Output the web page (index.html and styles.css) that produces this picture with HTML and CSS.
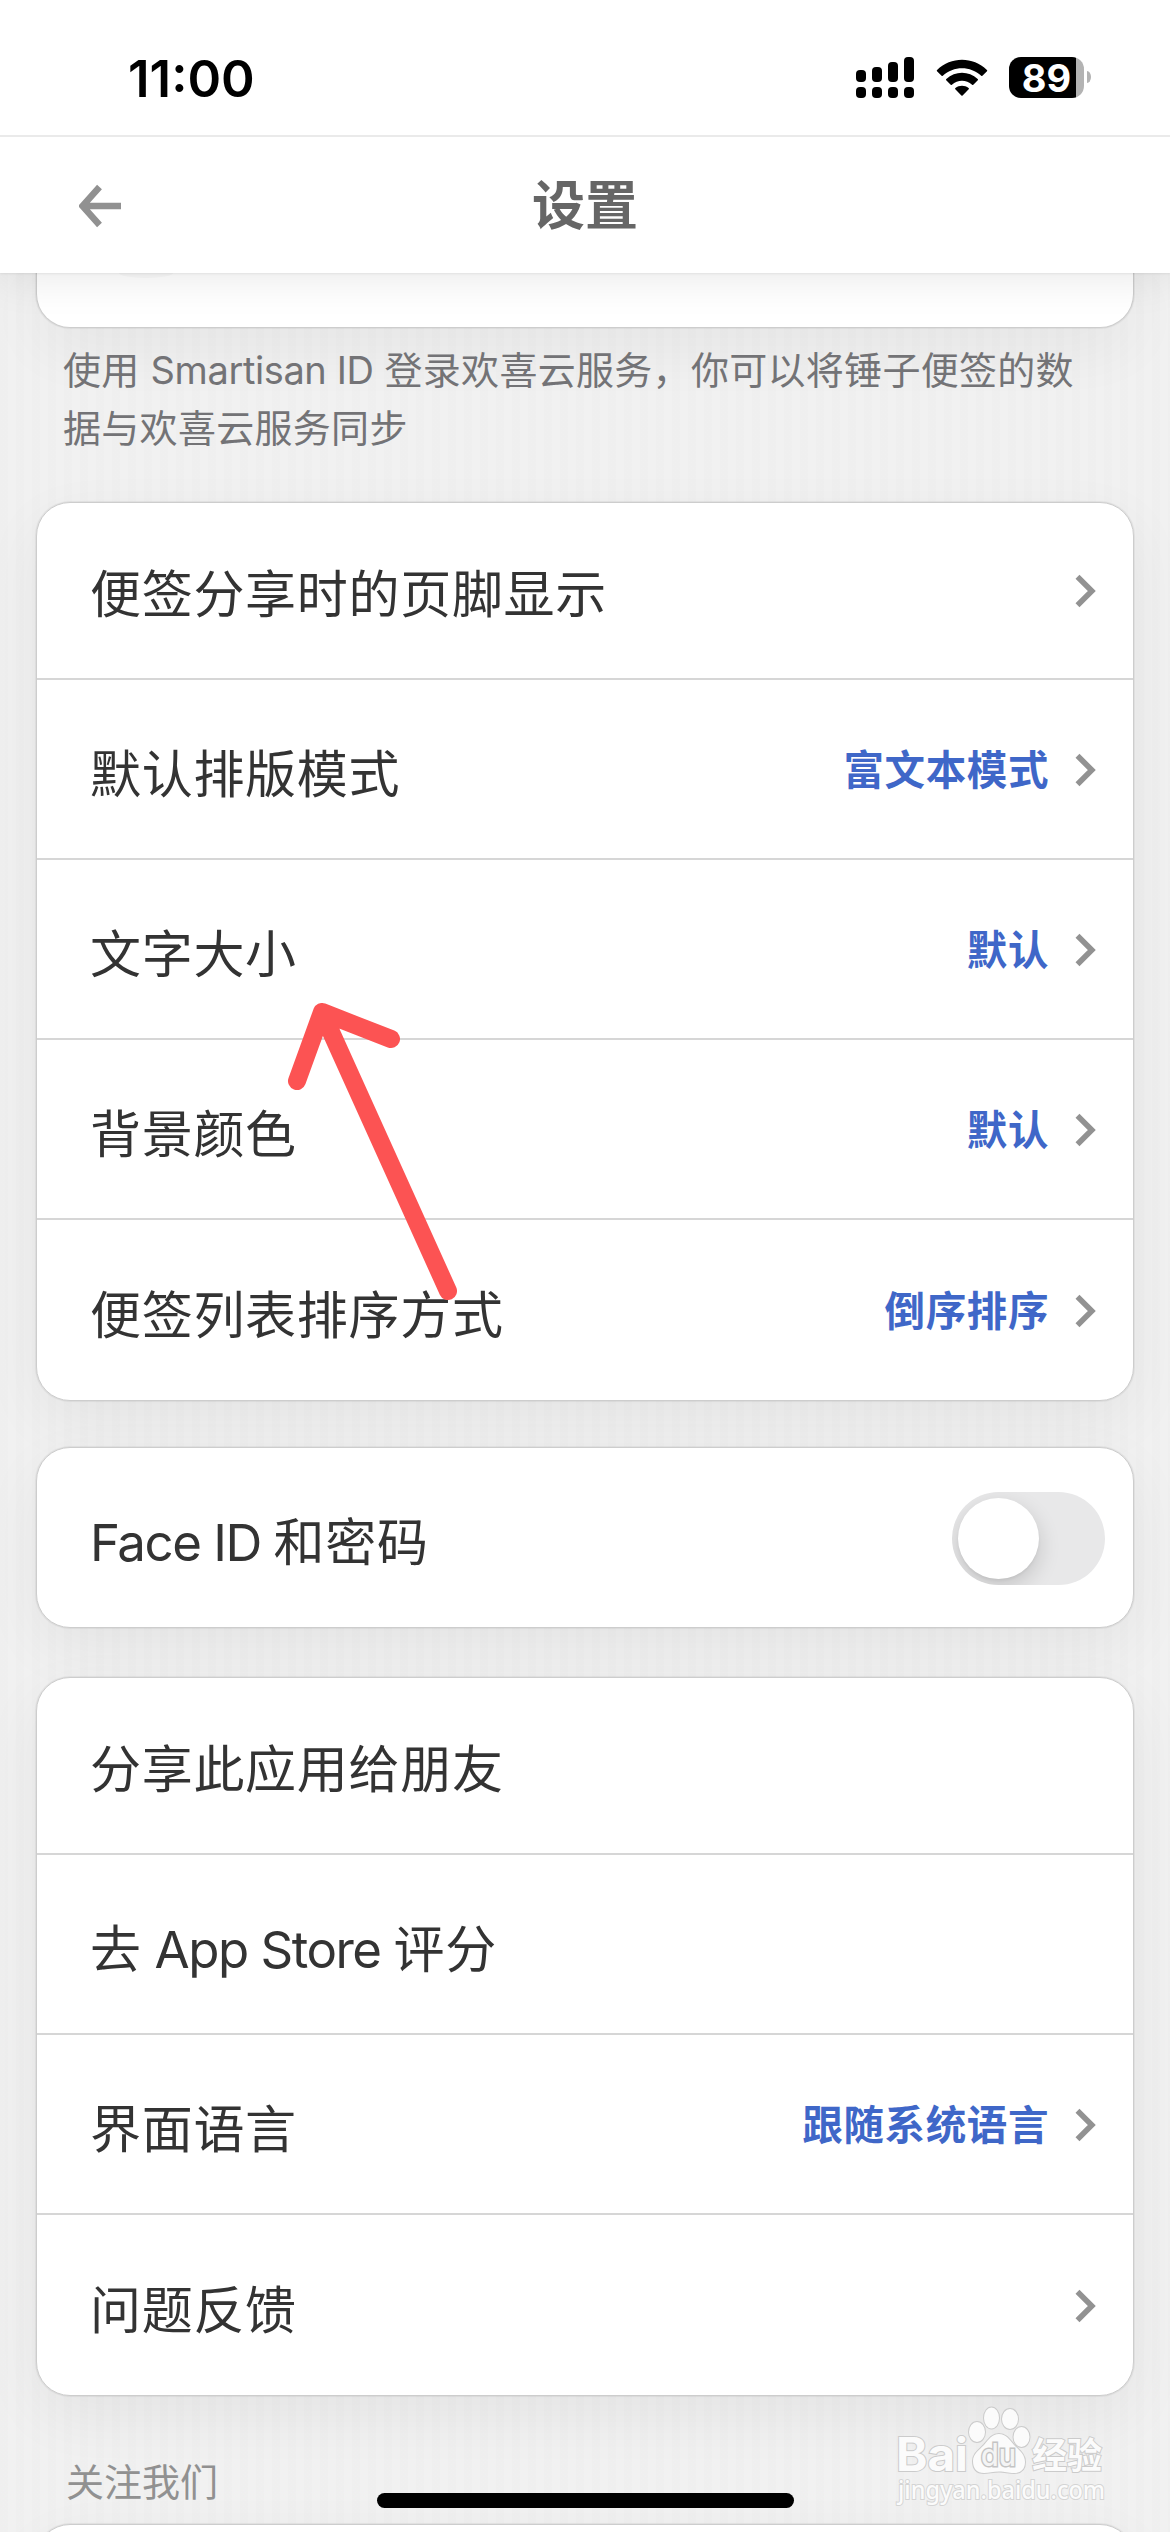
FILE: index.html
```html
<!DOCTYPE html>
<html lang="zh-CN">
<head>
<meta charset="utf-8">
<title>设置</title>
<link rel="stylesheet" href="styles.css">
</head>
<body>
<svg class="defs" width="0" height="0">
  <symbol id="chevron" viewBox="0 0 21 34"><path d="M2.5 2.8 16.8 17 2.5 31.2" fill="none" stroke="#929292" stroke-width="5.6"/></symbol>
</svg>
<div class="screen">
  <div class="status">
    <span class="time">11:00</span>
    <div class="indicators">
      <svg class="signal" width="58" height="42" viewBox="0 0 58 42">
        <rect x="0" y="13" width="10" height="12" rx="4"/><rect x="16" y="10" width="10" height="15" rx="4"/><rect x="32" y="5" width="10" height="20" rx="4"/><rect x="48" y="0" width="10" height="25" rx="4"/>
        <rect x="0" y="30" width="10" height="11" rx="4"/><rect x="16" y="30" width="10" height="11" rx="4"/><rect x="32" y="30" width="10" height="11" rx="4"/><rect x="48" y="30" width="10" height="11" rx="4"/>
      </svg>
      <svg class="wifi" width="52" height="38" viewBox="0 0 52 38">
        <path d="M1 12.2 5.6 16.8Q6.2 17.2 6.8 16.7C17.5 6.700 34.500 6.700 45.200 16.700Q45.800 17.200 46.400 16.700L51 12.200Q51.500 11.500 50.900 10.900C37-2.800 15-2.800 1.100 10.900Q.5 11.500 1 12.200Z"/>
        <path d="M10.200 21.200 14.700 25.700Q15.300 26.200 15.900 25.700C21.700 20.500 30.300 20.500 36.100 25.700Q36.700 26.200 37.300 25.700L41.800 21.200Q42.300 20.600 41.700 20C32.700 11.700 19.300 11.700 10.300 20Q9.700 20.600 10.200 21.200Z"/>
        <path d="M19.300 30.200 25.400 36.400Q26 37 26.600 36.400L32.700 30.200Q33.300 29.600 32.600 29C28.800 26 23.200 26 19.400 29Q18.700 29.600 19.300 30.200Z"/>
      </svg>
      <div class="battery"><span class="level">89</span></div>
      <span class="nub"></span>
    </div>
  </div>
  <header class="navbar">
    <svg class="back" width="44" height="44" viewBox="0 0 44 44"><path d="M42 22H5M20.500 3 3.500 22 20.500 41" fill="none" stroke="#919191" stroke-width="6.500"/></svg>
    <h1 class="title">设置</h1>
    <span class="back"></span>
  </header>
  <main class="content">
    <section class="card account"><span class="avatar"></span></section>
    <p class="hint">使用 <span class="en">Smartisan ID</span> 登录欢喜云服务，你可以将锤子便签的数<br>据与欢喜云服务同步</p>
    <section class="card">
      <div class="row"><span class="label">便签分享时的页脚显示</span><svg class="chev"><use href="#chevron"/></svg></div>
      <div class="row"><span class="label">默认排版模式</span><span class="value">富文本模式</span><svg class="chev"><use href="#chevron"/></svg></div>
      <div class="row"><span class="label">文字大小</span><span class="value">默认</span><svg class="chev"><use href="#chevron"/></svg></div>
      <div class="row"><span class="label">背景颜色</span><span class="value">默认</span><svg class="chev"><use href="#chevron"/></svg></div>
      <div class="row"><span class="label">便签列表排序方式</span><span class="value">倒序排序</span><svg class="chev"><use href="#chevron"/></svg></div>
    </section>
    <section class="card lock">
      <div class="row"><span class="label"><span class="en">Face ID </span>和密码</span><span class="toggle"><span class="knob"></span></span></div>
    </section>
    <section class="card about">
      <div class="row"><span class="label">分享此应用给朋友</span></div>
      <div class="row"><span class="label">去<span class="en"> App Store </span>评分</span></div>
      <div class="row"><span class="label">界面语言</span><span class="value">跟随系统语言</span><svg class="chev"><use href="#chevron"/></svg></div>
      <div class="row"><span class="label">问题反馈</span><svg class="chev"><use href="#chevron"/></svg></div>
    </section>
    <h2 class="group">关注我们</h2>
    <section class="card follow"></section>
  </main>
  <svg class="pointer" width="160" height="310" viewBox="0 0 160 310"><path d="M12 91 37 22 106 49M37 22 163 301" transform="translate(-3 -2)"/></svg>
  <svg class="watermark" width="240" height="130" viewBox="0 0 240 130">
    <g class="mark">
      <text class="latin" x="6" y="71" textLength="72" lengthAdjust="spacingAndGlyphs">Bai</text>
      <ellipse cx="87" cy="32" rx="8" ry="10"/>
      <ellipse cx="101.500" cy="18" rx="7.500" ry="10.500"/>
      <ellipse cx="120" cy="19" rx="8" ry="10"/>
      <ellipse cx="131.500" cy="37" rx="8" ry="10"/>
      <path d="M109 34C116 34 119 39 124 45C129 50 135 54 135 62C135 70 130 73 124 73C118 73 115 71.500 109 71.500C103 71.500 99 73 94 73C87 73 83 69 83 61C83 54 89 50 94 45C99 39 102 34 109 34Z"/>
      <text class="du" x="91" y="66" textLength="35" lengthAdjust="spacingAndGlyphs">du</text>
      <text class="cjk" x="142" y="69" textLength="70" lengthAdjust="spacingAndGlyphs">经验</text>
      <text class="site" x="8" y="99" textLength="207" lengthAdjust="spacingAndGlyphs">jingyan.baidu.com</text>
    </g>
  </svg>
  <span class="home"></span>
</div>
</body>
</html>
```
FILE: styles.css
```css
* { box-sizing: border-box; }

body {
  margin: 0;
  font-family: Inter, "Noto Sans CJK SC", sans-serif;
  color: #333;
}

.defs { position: absolute; }

.screen {
  position: relative;
  display: flex;
  flex-direction: column;
  width: 1170px;
  height: 2532px;
  overflow: hidden;
  background: #f1f1f1 repeating-linear-gradient(90deg, rgba(0,0,0,.008) 0 8px, transparent 8px 16px);
}

.status {
  z-index: 2;
  flex: none;
  display: flex;
  justify-content: space-between;
  height: 137px;
  padding: 57px 79px 0 128px;
  background: #fff;
  border-bottom: 2px solid #eaeaea;
}
.time {
  font-size: 51px;
  font-weight: 600;
  line-height: 43px;
  color: #000;
}
.indicators { display: flex; height: 42px; }
.wifi { margin: 2px 21px 0 22px; }
.battery {
  width: 75px;
  height: 41px;
  border-radius: 12px;
  background: linear-gradient(90deg, #000 67px, #b3b3b3 67px);
}
.level {
  display: block;
  width: 75px;
  text-align: center;
  font-size: 38px;
  font-weight: 700;
  line-height: 42px;
  color: #fff;
}
.nub {
  width: 4px;
  height: 12px;
  margin: 14px 0 0 3px;
  border-radius: 0 4px 4px 0 / 0 6px 6px 0;
  background: #b3b3b3;
}

.navbar {
  z-index: 1;
  flex: none;
  display: flex;
  align-items: center;
  justify-content: space-between;
  height: 136px;
  padding: 2px 79px 0;
  background: #fff;
  box-shadow: 0 0 3px rgba(0,0,0,.13), 0 6px 40px rgba(0,0,0,.09);
}
.back { width: 44px; }
.title {
  margin: 0;
  font-size: 53px;
  font-weight: 700;
  line-height: 80px;
  color: #666;
}

.content {
  flex: none;
  display: flex;
  flex-direction: column;
  padding: 0 36px;
}
.card {
  flex: none;
  background: #fff;
  border: 1px solid #cdcdcd;
  border-radius: 34px;
  box-shadow: 0 0 1px 1px rgba(0,0,0,.06), 0 20px 60px rgba(0,0,0,.055);
}
.account {
  height: 55px;
  border-top: 0;
  border-radius: 0 0 34px 34px;
}
.avatar {
  display: block;
  width: 54px;
  height: 5px;
  margin-left: 82px;
  border-radius: 0 0 27px 27px / 0 0 5px 5px;
  background: #f9f9f9;
}
.hint {
  margin: 14px 0 45px;
  padding-left: 27px;
  font-size: 38px;
  line-height: 57.5px;
  letter-spacing: .3px;
  color: #737376;
  white-space: nowrap;
}
.hint .en { letter-spacing: -.4px; }
.row {
  display: flex;
  align-items: center;
  height: 180px;
  padding: 2px 37px 0 53px;
  border-bottom: 2px solid #d6d6d6;
}
.row:first-child { height: 177px; padding-top: 0; }
.row:last-child { border-bottom: 0; }
.label {
  flex: 1;
  padding-top: 9px;
  font-size: 51px;
  line-height: 72px;
  letter-spacing: .7px;
}
.label .en { letter-spacing: -1.5px; }
.value {
  margin-right: 26px;
  padding-top: 2px;
  font-size: 40.500px;
  font-weight: 700;
  line-height: 60px;
  letter-spacing: .6px;
  color: #3f67c8;
}
.chev { width: 21px; height: 34px; }

.lock { margin-top: 46px; }
.lock .row:first-child { height: 179px; padding-right: 28px; padding-top: 2px; }
.toggle {
  width: 153px;
  height: 93px;
  padding: 6px;
  border-radius: 47px;
  background: #e8e8e9;
  overflow: hidden;
}
.knob {
  display: block;
  width: 81px;
  height: 81px;
  border-radius: 50%;
  background: #fff;
  box-shadow: 0 8px 22px rgba(0,0,0,.16), 0 2px 3px rgba(0,0,0,.05);
}
.about { margin-top: 49px; }
.group {
  margin: 56px 0 12px;
  padding-left: 30px;
  font-size: 38px;
  font-weight: 400;
  line-height: 60px;
  color: #919191;
}
.follow { height: 90px; }

.pointer {
  position: absolute;
  left: 288px;
  top: 992px;
  overflow: visible;
}
.pointer path {
  fill: none;
  stroke: #fc5353;
  stroke-width: 18px;
  stroke-linecap: round;
  stroke-linejoin: round;
}

.watermark {
  position: absolute;
  left: 890px;
  top: 2400px;
}
.mark {
  fill: #fbfbfb;
  stroke: #cbcbcb;
  stroke-width: 2px;
  paint-order: stroke;
}
.latin { font: 700 46px Inter, sans-serif; }
.du { font: 500 31px Inter, sans-serif; fill: #f4f4f4; stroke: #c4c4c4; stroke-width: 3px; }
.cjk { font: 700 36px "Noto Sans CJK SC", sans-serif; }
.site { font: 500 25px "Noto Sans", sans-serif; stroke: #d4d4d4; }

.home {
  position: absolute;
  left: 377px;
  top: 2493px;
  width: 417px;
  height: 15px;
  border-radius: 8px;
  background: #000;
}
```
